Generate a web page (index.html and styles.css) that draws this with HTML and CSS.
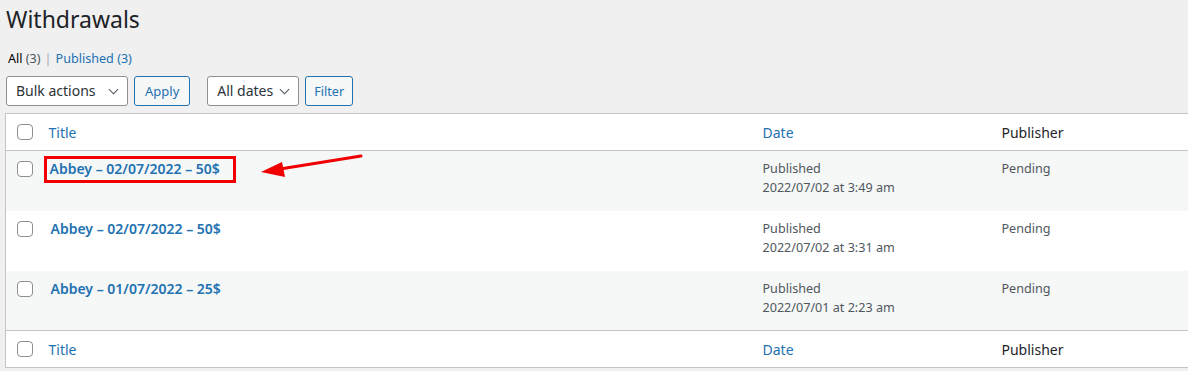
FILE: index.html
```html
<!DOCTYPE html>
<html lang="en">
<head>
  <meta charset="UTF-8" />
  <title>Withdrawals</title>
  <link rel="stylesheet" href="styles.css">
</head>
<body>

  <div class="wrap">
    <h1>Withdrawals</h1>

    <!-- STATUS LINKS -->
    <ul class="subsubsub">
      <li class="current">All <span class="count">(3)</span></li>
      <li class="sep">|</li>
      <li><a>Published <span class="count">(3)</span></a></li>
    </ul>

    <!-- TOOLBAR -->
    <div class="tablenav">
      <div class="select bulk">Bulk actions <span class="chev"></span></div>
      <button class="btn">Apply</button>
      <div class="select dates">All dates <span class="chev"></span></div>
      <button class="btn">Filter</button>
    </div>

    <!-- LIST TABLE -->
    <div class="table-box">
      <table class="list">
        <thead>
          <tr>
            <th class="cb"><span class="check"></span></th>
            <th class="col-title"><a>Title</a></th>
            <th class="col-date"><a>Date</a></th>
            <th class="col-pub">Publisher</th>
          </tr>
        </thead>
        <tbody>
          <tr class="alt">
            <td class="cb"><span class="check"></span></td>
            <td class="col-title"><span class="mark"><a class="row-title">Abbey &ndash; 02/07/2022 &ndash; 50$</a></span></td>
            <td class="col-date">Published<br>2022/07/02 at 3:49 am</td>
            <td class="col-pub">Pending</td>
          </tr>
          <tr>
            <td class="cb"><span class="check"></span></td>
            <td class="col-title"><a class="row-title">Abbey &ndash; 02/07/2022 &ndash; 50$</a></td>
            <td class="col-date">Published<br>2022/07/02 at 3:31 am</td>
            <td class="col-pub">Pending</td>
          </tr>
          <tr class="alt">
            <td class="cb"><span class="check"></span></td>
            <td class="col-title"><a class="row-title">Abbey &ndash; 01/07/2022 &ndash; 25$</a></td>
            <td class="col-date">Published<br>2022/07/01 at 2:23 am</td>
            <td class="col-pub">Pending</td>
          </tr>
        </tbody>
        <tfoot>
          <tr>
            <th class="cb"><span class="check"></span></th>
            <th class="col-title"><a>Title</a></th>
            <th class="col-date"><a>Date</a></th>
            <th class="col-pub">Publisher</th>
          </tr>
        </tfoot>
      </table>

      <!-- annotation arrow -->
      <svg class="arrow" width="110" height="30" viewBox="0 0 110 30">
        <line x1="103" y1="4" x2="22" y2="17" stroke="#f00000" stroke-width="3" stroke-linecap="round" />
        <polygon points="3,20 24,10 27,25" fill="#f00000" />
      </svg>
    </div>
  </div>

</body>
</html>
```

FILE: styles.css
```css
body {
  margin: 0;
  background: #f0f0f1;
  color: #3c434a;
  font-family: "Noto Sans", "Open Sans", sans-serif;
  font-size: 13px;
  overflow: hidden;
}
a {
  color: #2271b1;
  text-decoration: none;
}
.wrap {
  padding-left: 5px;
}
h1 {
  margin: 0;
  padding: 5px 0 0 1px;
  font-size: 23px;
  font-weight: 400;
  line-height: 29px;
  color: #1d2327;
}
.subsubsub {
  list-style: none;
  margin: 0;
  padding: 0 0 0 3px;
  display: flex;
  gap: 4px;
  height: 26px;
  margin-top: 16px;
  line-height: 18px;
  font-size: 12.6px;
}
.subsubsub .current {
  color: #000;
}
.subsubsub .count {
  color: #50575e;
}
.subsubsub a .count {
  color: #2271b1;
}
.subsubsub .sep {
  color: #a7aaad;
}
.tablenav {
  display: flex;
  align-items: center;
  height: 30px;
  padding-left: 1px;
  margin-top: 0;
  margin-bottom: 7px;
}
.select {
  box-sizing: border-box;
  height: 30px;
  border: 1px solid #8c8f94;
  border-radius: 3px;
  background: #fff;
  color: #2c3338;
  font-size: 14px;
  line-height: 28px;
  padding-left: 9px;
  position: relative;
}
.select.bulk {
  width: 122px;
  margin-right: 6px;
}
.select.dates {
  width: 92px;
  margin-left: 17px;
  margin-right: 6px;
}
.chev {
  position: absolute;
  right: 10px;
  top: 9px;
  width: 6px;
  height: 6px;
  border-right: 1.6px solid #50575e;
  border-bottom: 1.6px solid #50575e;
  transform: rotate(45deg);
}
.btn {
  box-sizing: border-box;
  height: 30px;
  padding: 0 10px;
  border: 1px solid #2271b1;
  border-radius: 3px;
  background: #f6f7f7;
  color: #2271b1;
  font-family: inherit;
  font-size: 13px;
}
.dates + .btn {
  padding: 0 8px;
  font-size: 12.6px;
}
.table-box {
  position: relative;
}
.list {
  width: 1240px;
  border-collapse: collapse;
  background: #fff;
  border: 1px solid #c3c4c7;
  table-layout: fixed;
}
.list th,
.list td {
  text-align: left;
  vertical-align: top;
  padding: 0 10px;
  font-weight: 400;
}
.list th {
  height: 36px;
  vertical-align: middle;
  font-size: 14px;
  color: #1d2327;
}
.list thead tr {
  border-bottom: 1px solid #c3c4c7;
}
.list tfoot tr {
  border-top: 1px solid #c3c4c7;
}
.list td {
  height: 60px;
  padding-top: 8px;
  padding-bottom: 0;
  line-height: 19px;
  box-sizing: border-box;
}
.list tr.alt td {
  background: #f6f7f7;
}
.list .cb {
  width: 33px;
  padding: 0 0 0 11px;
  box-sizing: border-box;
}
.list td.cb {
  padding-top: 10px;
}
.list th.cb .check {
  vertical-align: middle;
}
.list .col-title {
  width: 714px;
  box-sizing: border-box;
}
.list .col-date {
  width: 239px;
  box-sizing: border-box;
}
.check {
  display: block;
  width: 14px;
  height: 14px;
  border: 1px solid #8c8f94;
  border-radius: 4px;
  background: #fff;
}
.row-title {
  font-size: 14px;
  font-weight: 600;
  margin-left: 2px;
}
.mark {
  display: inline-block;
  margin: -3px 0 0 -5px;
  padding: 0 13px 1px 1px;
  border: 3px solid #f00000;
}
.list td.col-date,
.list td.col-pub {
  color: #50575e;
  font-size: 12.6px;
}
.arrow {
  position: absolute;
  left: 253px;
  top: 39px;
}
```
